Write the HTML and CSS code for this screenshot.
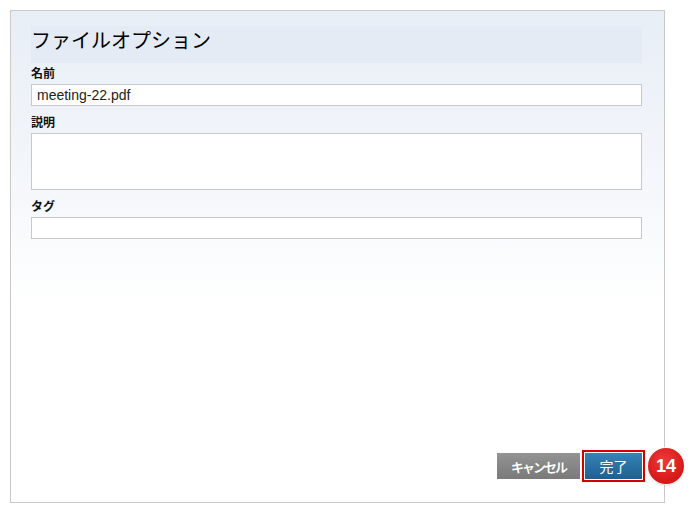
FILE: index.html
```html
<!DOCTYPE html>
<html lang="ja">
<head>
<meta charset="utf-8">
<title>ファイルオプション</title>
<link rel="stylesheet" href="styles.css">
</head>
<body>
<div class="panel">
  <h1 class="title">ファイルオプション</h1>
  <div class="field first">
    <label class="label">名前</label>
    <div class="input">meeting-22.pdf</div>
  </div>
  <div class="field">
    <label class="label">説明</label>
    <div class="input textarea"></div>
  </div>
  <div class="field">
    <label class="label">タグ</label>
    <div class="input"></div>
  </div>
  <div class="actions">
    <button class="btn cancel">キャンセル</button>
    <button class="btn done">完了</button>
    <span class="badge">14</span>
  </div>
</div>
</body>
</html>
```

FILE: styles.css
```css
html, body {
  margin: 0;
  padding: 0;
  background: #ffffff;
}
body {
  font-family: "Noto Sans CJK JP", "Liberation Sans", sans-serif;
  color: #111;
}
.panel {
  position: relative;
  box-sizing: border-box;
  margin: 10px 0 0 10px;
  width: 655px;
  height: 493px;
  border: 1px solid #c9c9c9;
  background: linear-gradient(to bottom, #e8eef6 0%, #f4f7fb 35%, #ffffff 60%);
  padding: 15px 22px 23px 20px;
  display: flex;
  flex-direction: column;
}
.title {
  margin: 0 0 2px 0;
  height: 37px;
  background: #e4ebf4;
  font-size: 20px;
  font-weight: 400;
  line-height: 28px;
  padding-left: 0;
  color: #000;
}
.field {
  display: flex;
  flex-direction: column;
  margin-top: 8px;
}
.field.first {
  margin-top: 0;
}
.label {
  font-size: 12px;
  font-weight: 700;
  line-height: 16px;
  margin-bottom: 3px;
  color: #111;
}
.input {
  box-sizing: border-box;
  height: 22px;
  border: 1px solid #c8c8c8;
  background: #fff;
  font-family: "Liberation Sans", Arial, sans-serif;
  font-size: 14px;
  line-height: 20px;
  padding-left: 5px;
  color: #222;
}
.textarea {
  height: 57px;
}
.actions {
  margin-top: auto;
  display: flex;
  justify-content: flex-end;
  align-items: center;
  gap: 5px;
  position: relative;
}
.btn {
  box-sizing: border-box;
  height: 26px;
  border: none;
  padding: 0;
  color: #fff;
  font-family: "Noto Sans CJK JP", sans-serif;
  cursor: pointer;
}
.cancel {
  width: 83px;
  font-size: 13px;
  font-weight: 700;
  letter-spacing: -2px;
  background: linear-gradient(to bottom, #939393, #7a7a7a);
  text-shadow: 0 0 1px rgba(0,0,0,0.3);
}
.done {
  width: 57px;
  font-size: 14px;
  font-weight: 400;
  background: linear-gradient(to bottom, #3583b8, #1f5f90);
  box-shadow: 0 0 0 1px #ffffff, 0 0 0 3px #d30000;
}
.badge {
  position: absolute;
  right: -42px;
  top: -5px;
  width: 36px;
  height: 36px;
  border-radius: 50%;
  background: radial-gradient(circle at 45% 35%, #ee3a3a 0%, #d91c1c 60%, #c41212 100%);
  box-shadow: 0 0 0 1px rgba(255,255,255,0.8), 0 1px 2px rgba(0,0,0,0.25);
  color: #fff;
  font-family: "Liberation Sans", Arial, sans-serif;
  font-weight: 700;
  font-size: 18px;
  line-height: 36px;
  text-align: center;
}
```
